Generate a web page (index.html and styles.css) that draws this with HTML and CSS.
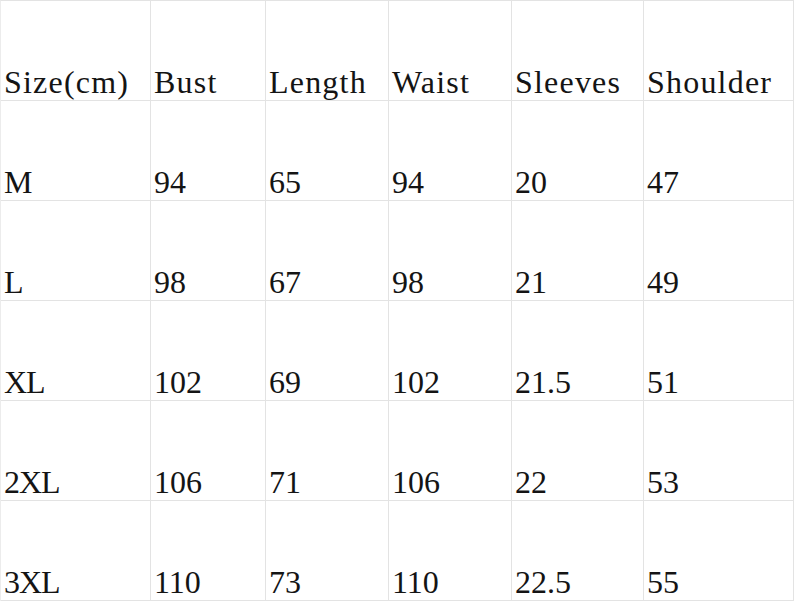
FILE: index.html
```html
<!DOCTYPE html>
<html lang="en">
<head>
<meta charset="utf-8">
<title>Size chart</title>
<link rel="stylesheet" href="styles.css">
</head>
<body>
<div class="chart">
  <div class="cell head"><span class="t">Size(cm)</span></div>
  <div class="cell head"><span class="t">Bust</span></div>
  <div class="cell head"><span class="t">Length</span></div>
  <div class="cell head"><span class="t">Waist</span></div>
  <div class="cell head"><span class="t">Sleeves</span></div>
  <div class="cell head"><span class="t">Shoulder</span></div>

  <div class="cell size"><span class="t">M</span></div>
  <div class="cell"><span class="t">94</span></div>
  <div class="cell"><span class="t">65</span></div>
  <div class="cell"><span class="t">94</span></div>
  <div class="cell"><span class="t">20</span></div>
  <div class="cell"><span class="t">47</span></div>

  <div class="cell size"><span class="t">L</span></div>
  <div class="cell"><span class="t">98</span></div>
  <div class="cell"><span class="t">67</span></div>
  <div class="cell"><span class="t">98</span></div>
  <div class="cell"><span class="t">21</span></div>
  <div class="cell"><span class="t">49</span></div>

  <div class="cell size"><span class="t">XL</span></div>
  <div class="cell"><span class="t">102</span></div>
  <div class="cell"><span class="t">69</span></div>
  <div class="cell"><span class="t">102</span></div>
  <div class="cell"><span class="t">21.5</span></div>
  <div class="cell"><span class="t">51</span></div>

  <div class="cell size"><span class="t">2XL</span></div>
  <div class="cell"><span class="t">106</span></div>
  <div class="cell"><span class="t">71</span></div>
  <div class="cell"><span class="t">106</span></div>
  <div class="cell"><span class="t">22</span></div>
  <div class="cell"><span class="t">53</span></div>

  <div class="cell size"><span class="t">3XL</span></div>
  <div class="cell"><span class="t">110</span></div>
  <div class="cell"><span class="t">73</span></div>
  <div class="cell"><span class="t">110</span></div>
  <div class="cell"><span class="t">22.5</span></div>
  <div class="cell"><span class="t">55</span></div>
</div>
</body>
</html>
```

FILE: styles.css
```css
html, body {
  margin: 0;
  padding: 0;
  background: #ffffff;
}

.chart {
  display: grid;
  grid-template-columns: 150px 115px 123px 123px 132px 150px;
  grid-auto-rows: 100px;
  width: max-content;
  border-top: 1px solid #e3e3e3;
  border-left: 1px solid #ececec;
  font-family: "Liberation Serif", "Times New Roman", serif;
  color: #141414;
}

.cell {
  box-sizing: border-box;
  border-right: 1px solid #e3e3e3;
  border-bottom: 1px solid #e3e3e3;
  display: flex;
  align-items: flex-end;
  padding: 0 0 2px 3px;
}

.t {
  display: block;
  font-size: 32px;
  line-height: 1;
  white-space: nowrap;
}

.head .t {
  letter-spacing: 1.2px;
}

.size .t {
  letter-spacing: -1px;
}
```
